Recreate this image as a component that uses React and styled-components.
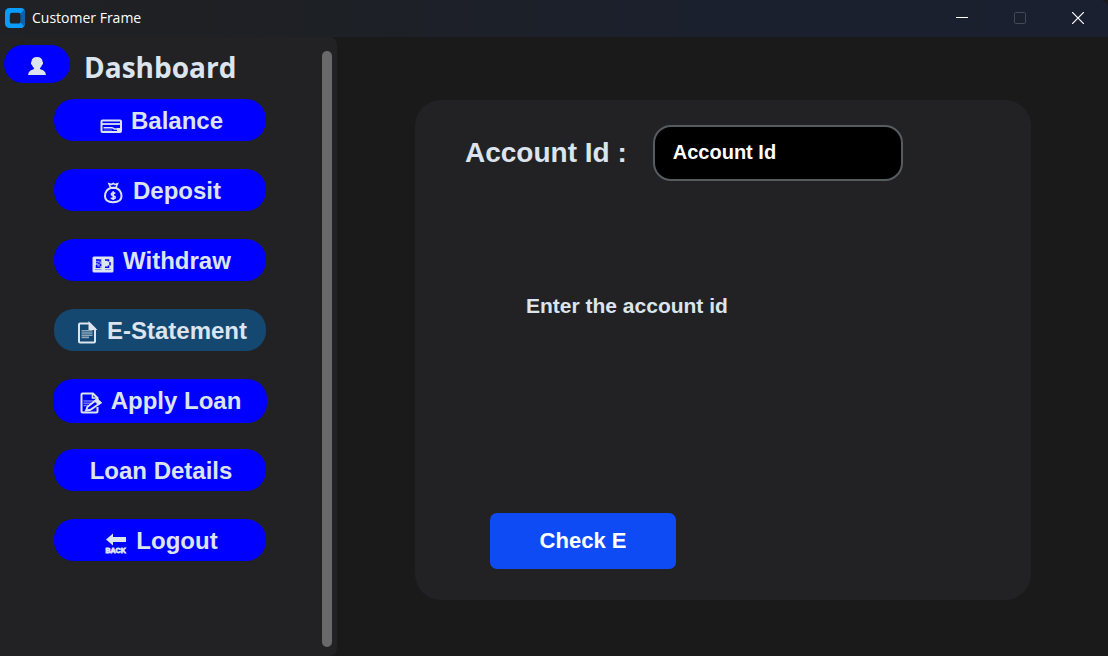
import React from "react";
import styled, { createGlobalStyle } from "styled-components";

const GlobalStyle = createGlobalStyle`
  *, *::before, *::after { box-sizing: border-box; }
  body { margin: 0; background: #1a1a1a; }
  button, input { font: inherit; }
`;

const Window = styled.div`
  min-height: 100vh;
  display: flex;
  flex-direction: column;
  background: #1a1a1a;
  color: #dce4ee;
  font-family: "Liberation Sans", Arial, sans-serif;
  font-weight: 700;
`;

const TitleBar = styled.header`
  height: 37px;
  display: flex;
  align-items: center;
  gap: 7px;
  padding: 0 1px 1px 5px;
  border-top-right-radius: 8px;
  background: linear-gradient(90deg, #202124 0%, #1d2025 30%, #1b202f 70%, #1b2030 100%);
`;

const WindowTitle = styled.span`
  flex: 1;
  color: #ffffff;
  font-family: "Open Sans", "Noto Sans", sans-serif;
  font-size: 14px;
  line-height: 20px;
  font-weight: 400;
`;

const WindowControls = styled.div`
  display: flex;
  height: 100%;
`;

const WindowButton = styled.button`
  width: 58px;
  padding: 0;
  display: grid;
  place-items: center;
  border: 0;
  background: transparent;
  color: ${(p) => (p.disabled ? "#454857" : "#ffffff")};
`;

const Body = styled.div`
  flex: 1;
  display: flex;
`;

const Sidebar = styled.aside`
  flex: 0 0 337px;
  display: flex;
  border-radius: 0 8px 8px 0;
  background: #222224;
`;

const SidebarContent = styled.div`
  flex: 1;
  padding: 8px 6px 8px 4px;
`;

const ScrollThumb = styled.div`
  width: 10px;
  margin: 14px 5px 9px 0;
  border-radius: 5px;
  background: #696969;
`;

const SidebarHeader = styled.div`
  height: 38px;
  display: flex;
  align-items: center;
  gap: 14px;
`;

const ProfileButton = styled.button`
  width: 66px;
  height: 38px;
  padding: 4px 0 0;
  display: grid;
  place-items: center;
  border: 0;
  border-radius: 19px;
  background: #0000ff;
  color: #dce4ee;
`;

const Heading = styled.h1`
  margin: 0;
  padding-top: 6px;
  font-family: "Open Sans", "Noto Sans", sans-serif;
  font-size: 28px;
  line-height: 32px;
  font-weight: 700;
`;

const NavList = styled.ul`
  list-style: none;
  margin: 16px 0 0;
  padding: 0;
  display: grid;
  grid-auto-rows: 42px;
  row-gap: 28px;
  justify-content: center;
`;

const NavButton = styled.button`
  width: ${(p) => (p.$large ? 214 : 212)}px;
  height: ${(p) => (p.$large ? 44 : 42)}px;
  margin: 0 ${(p) => (p.$large ? -1 : 0)}px;
  padding: ${(p) => (p.$large ? "0" : "2px 0 0 2px")};
  display: flex;
  align-items: center;
  justify-content: center;
  gap: 8px;
  border: 0;
  border-radius: 20px;
  background: ${(p) => (p.$active ? "#144870" : "#0000ff")};
  color: #dce4ee;
  font-size: 24px;
  line-height: 28px;
  white-space: nowrap;

  svg {
    margin-top: 4px;
    flex: none;
  }
`;

const Main = styled.main`
  flex: 1;
  display: flex;
  justify-content: center;
  align-items: flex-start;
  padding: 63px 0 56px 1px;
`;

const Panel = styled.form`
  width: 80%;
  min-height: 500px;
  display: flex;
  flex-direction: column;
  align-items: flex-start;
  padding: 25px 50px 31px;
  border-radius: 26px;
  background: #222224;
`;

const Field = styled.div`
  display: flex;
  align-items: center;
  gap: 26px;
`;

const FieldLabel = styled.label`
  font-size: 28px;
  line-height: 32px;
  white-space: nowrap;
`;

const TextInput = styled.input`
  width: 250px;
  height: 56px;
  padding: 0 18px 2px;
  border: 2px solid #565b5e;
  border-radius: 18px;
  background: #000000;
  color: #ffffff;
  font-size: 20px;
  outline: none;

  &::placeholder {
    color: #ffffff;
    opacity: 1;
  }
`;

const Message = styled.p`
  margin: 112px 0 auto 61px;
  font-size: 21px;
  line-height: 26px;
`;

const SubmitButton = styled.button`
  width: 186px;
  height: 56px;
  margin-left: 25px;
  padding: 0;
  border: 0;
  border-radius: 7px;
  background: #0f4bf5;
  color: #ffffff;
  font-size: 22px;
`;

const Icon = ({ children, ...rest }) => (
  <svg width="24" height="24" viewBox="0 0 24 24" fill="none" stroke="currentColor" strokeWidth="2" aria-hidden="true" {...rest}>
    {children}
  </svg>
);

const AppLogo = () => (
  <svg width="20" height="20" viewBox="0 0 20 20" aria-hidden="true">
    <rect width="20" height="20" rx="4.5" fill="#0a9bff" />
    <path d="M15.500 5 17 1.500Q20 2 20 4.500V15.500Q20 18 17 19.500L15.500 15.500Z" fill="#0a62ad" />
    <path d="M14.500 0H15.500Q18 0 19 1.800L15.500 5.500H13ZM14.500 20H15.500Q18 20 19 18.200L15.500 14.500H13Z" fill="#0a9bff" />
    <rect x="4.800" y="4.800" width="10.800" height="10.800" rx="2.200" fill="#202124" />
  </svg>
);

const PersonIcon = () => (
  <svg width="18" height="18" viewBox="0 0 18 18" fill="currentColor" aria-hidden="true">
    <path d="M9 0C12.500 0 14.500 1.800 14.500 4.500L15 5.500V7L14 8C13.500 9.500 12.500 10.500 12 11V12L15.500 13.500Q17.600 14.700 18 18H0Q.4 14.700 2.500 13.500L6 12V11C5.500 10.500 4.500 9.500 4 8L3 7V5.500L3.500 4.500C3.500 1.800 5.500 0 9 0Z" />
  </svg>
);

const CardIcon = () => (
  <Icon strokeWidth="2">
    <rect x="2.500" y="9.500" width="19.500" height="11.500" rx="1" />
    <path d="M2 13H22" strokeWidth="1.800" />
    <path d="M4.500 16.700H13L15.500 18H20" strokeWidth="1.500" />
    <path d="M4.500 19H13" strokeWidth="1" opacity="0.5" />
    <path d="M18 17H21V20H18Z" fill="currentColor" stroke="none" />
  </Icon>
);

const MoneyBagIcon = () => (
  <Icon strokeWidth="2">
    <path d="M9.500 7C5.500 8.500 4 12 4 15.300C4 19.200 7 21.200 12 21.200S20.500 19.200 20.500 15.300C20.500 12 19 8.500 15 7Z" />
    <path d="M9.500 6.500 8 2.700 10.500 3.500 12.200 2.500 14 3.500 16.500 2.700 15 6.500Z" strokeWidth="1.600" />
    <path d="M14.300 12.500C13.500 11.500 10.300 11.200 10.300 13.200C10.300 15.200 14.300 14.200 14.300 16.300C14.300 18.200 10.500 18 10 16.700M12.200 10.300V19" strokeWidth="1.600" />
  </Icon>
);

const BanknoteIcon = () => (
  <Icon>
    <rect x="1.500" y="5.500" width="21" height="16" rx="1.500" fill="currentColor" stroke="none" />
    <path d="M5 8H10.500V17H5Z" fill="#5b5ff5" opacity="0.7" stroke="none" />
    <path d="M5 9H8M9 8.500V10.500M6 11V12M8 11.500V13M9.500 13V15M5.500 14V16.300H9M14 9H17.500V10.500M19 11V14.500M17.500 14.500V16.300H14" stroke="#0000ff" strokeWidth="1.500" />
    <path d="M4 18.500H10.500M14 18.500H20" stroke="#5b5ff5" strokeWidth="1" opacity="0.6" />
  </Icon>
);

const DocumentIcon = () => (
  <Icon strokeWidth="2">
    <path d="M5 2.500H14.500L20 8V20.500Q20 21.500 19 21.500H5Q4 21.500 4 20.500V3.500Q4 2.500 5 2.500Z" />
    <path d="M14.500 2.500V8H20Z" fill="currentColor" />
    <path d="M6.500 9.800H17.500M6.500 12H17.500M6.500 14.200H17.500M6.500 16.400H14" strokeWidth="1.600" opacity="0.6" />
  </Icon>
);

const EditDocumentIcon = () => (
  <Icon strokeWidth="2">
    <path d="M18.500 9V7L14 2.500H3.500Q2.500 2.500 2.500 3.500V20.500Q2.500 21.500 3.500 21.500H17.500Q18.500 21.500 18.500 20.500V16" />
    <path d="M13.500 2.500V7H18.500" strokeWidth="1.600" />
    <path d="M4.500 10H15M4.500 12.200H12M4.500 14.400H9" strokeWidth="1.500" opacity="0.5" />
    <path d="M7 19.500 8.500 15.800 17.500 8.800 21.300 12 11.500 18.800Z" fill="#0000ff" strokeWidth="1.900" />
    <path d="M18 7.500 22.500 11.700 19.500 13.800 15.500 10Z" fill="currentColor" strokeWidth="1" />
  </Icon>
);

const BackText = styled.text`
  font: 700 7px "Liberation Sans", Arial, sans-serif;
`;

const BackIcon = () => (
  <Icon stroke="none" fill="currentColor">
    <path d="M2 8.500 9 2.500V6H22V11H9V14.500Z" />
    <BackText x="1.500" y="21.500" stroke="currentColor" strokeWidth="0.800">BACK</BackText>
  </Icon>
);

const navItems = [
  { label: "Balance", icon: CardIcon },
  { label: "Deposit", icon: MoneyBagIcon },
  { label: "Withdraw", icon: BanknoteIcon },
  { label: "E-Statement", icon: DocumentIcon, active: true },
  { label: "Apply Loan", icon: EditDocumentIcon, large: true },
  { label: "Loan Details" },
  { label: "Logout", icon: BackIcon },
];

export default function App() {
  return (
    <Window>
      <GlobalStyle />
      <TitleBar>
        <AppLogo />
        <WindowTitle>Customer Frame</WindowTitle>
        <WindowControls>
          <WindowButton type="button" aria-label="Minimize">
            <svg width="12" height="12" viewBox="0 0 12 12"><path d="M0 5.500H12" stroke="currentColor" /></svg>
          </WindowButton>
          <WindowButton type="button" aria-label="Maximize" disabled>
            <svg width="12" height="12" viewBox="0 0 12 12"><rect x=".5" y=".5" width="11" height="11" rx="1" fill="none" stroke="currentColor" /></svg>
          </WindowButton>
          <WindowButton type="button" aria-label="Close">
            <svg width="12" height="12" viewBox="0 0 12 12"><path d="M0 0 12 12M12 0 0 12" stroke="currentColor" strokeWidth="1.200" /></svg>
          </WindowButton>
        </WindowControls>
      </TitleBar>
      <Body>
        <Sidebar>
          <SidebarContent>
            <SidebarHeader>
              <ProfileButton type="button" aria-label="Profile"><PersonIcon /></ProfileButton>
              <Heading>Dashboard</Heading>
            </SidebarHeader>
            <nav>
              <NavList>
                {navItems.map(({ label, icon: ItemIcon, active, large }) => (
                  <li key={label}>
                    <NavButton type="button" $active={active} $large={large}>
                      {ItemIcon && <ItemIcon />}
                      {label}
                    </NavButton>
                  </li>
                ))}
              </NavList>
            </nav>
          </SidebarContent>
          <ScrollThumb />
        </Sidebar>
        <Main>
          <Panel onSubmit={(e) => e.preventDefault()}>
            <Field>
              <FieldLabel htmlFor="account-id">Account Id :</FieldLabel>
              <TextInput id="account-id" placeholder="Account Id" />
            </Field>
            <Message>Enter the account id</Message>
            <SubmitButton type="submit">Check E</SubmitButton>
          </Panel>
        </Main>
      </Body>
    </Window>
  );
}
